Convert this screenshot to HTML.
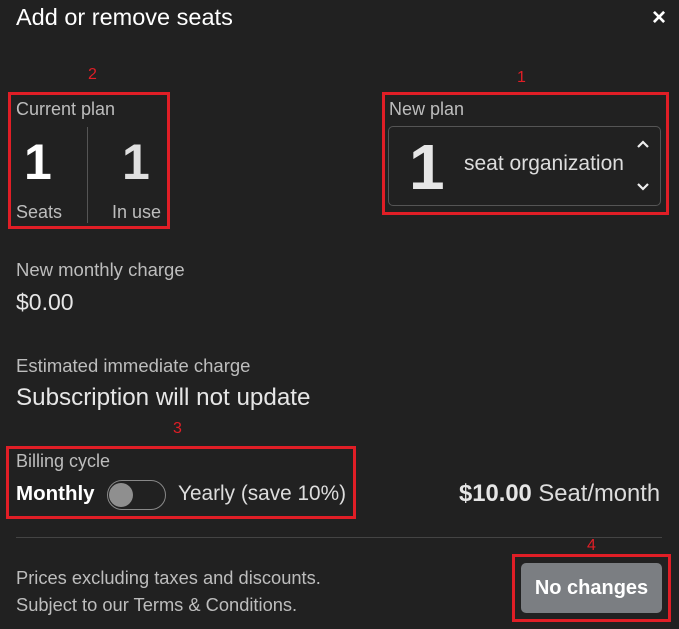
<!DOCTYPE html>
<html><head><style>
body{margin:0;width:679px;height:629px;background:#212121;font-family:"Liberation Sans",Arial,sans-serif;position:relative;overflow:hidden;color:#ddd}
.a{position:absolute;white-space:nowrap}
.red{position:absolute;border:3px solid #e01e26;box-sizing:border-box}
.rn{position:absolute;color:#e01e26;font-size:16px}
.lab{color:#bdbdbd;font-size:18px}
</style></head><body>
<div class="a" style="left:16px;top:4px;font-size:23.5px;color:#fff">Add or remove seats</div>
<div class="a" style="left:652px;top:4px;font-size:24px;color:#fff;font-weight:bold">×</div>

<div class="rn" style="left:88px;top:66px">2</div>
<div class="rn" style="left:517px;top:69px">1</div>
<div class="rn" style="left:173px;top:420px">3</div>
<div class="rn" style="left:587px;top:537px">4</div>

<div class="red" style="left:8px;top:92px;width:162px;height:137px"></div>
<div class="a lab" style="left:16px;top:99px">Current plan</div>
<div class="a" style="left:24px;top:133px;font-size:50px;font-weight:bold;color:#fff">1</div>
<div class="a" style="left:122px;top:133px;font-size:50px;font-weight:bold;color:#e0e0e0">1</div>
<div class="a" style="left:87px;top:127px;width:1px;height:96px;background:#555"></div>
<div class="a lab" style="left:16px;top:202px">Seats</div>
<div class="a lab" style="left:112px;top:202px">In use</div>

<div class="red" style="left:382px;top:92px;width:287px;height:123px"></div>
<div class="a lab" style="left:389px;top:99px">New plan</div>
<div class="a" style="left:388px;top:126px;width:273px;height:80px;border:1px solid #555;border-radius:5px;box-sizing:border-box"></div>
<div class="a" style="left:409px;top:130px;font-size:64px;font-weight:bold;color:#e6e6e6">1</div>
<div class="a" style="left:464px;top:152px;font-size:21px;color:#ddd">seat organization</div>
<svg class="a" style="left:635px;top:138px" width="16" height="56"><path d="M3 9 L8 4 L13 9" stroke="#eee" stroke-width="2.2" fill="none"/><path d="M3 46 L8 51 L13 46" stroke="#eee" stroke-width="2.2" fill="none"/></svg>

<div class="a lab" style="left:16px;top:259px;font-size:18.5px">New monthly charge</div>
<div class="a" style="left:16px;top:289px;font-size:23px;color:#e6e6e6">$0.00</div>
<div class="a lab" style="left:16px;top:355px;font-size:18.5px">Estimated immediate charge</div>
<div class="a" style="left:16px;top:384px;font-size:24.2px;color:#e6e6e6">Subscription will not update</div>

<div class="red" style="left:6px;top:446px;width:350px;height:73px"></div>
<div class="a lab" style="left:16px;top:451px">Billing cycle</div>
<div class="a" style="left:16px;top:482px;font-size:20.5px;font-weight:bold;color:#fff">Monthly</div>
<div class="a" style="left:107px;top:480px;width:59px;height:30px;border:1px solid #888;border-radius:16px;box-sizing:border-box"></div>
<div class="a" style="left:109px;top:483px;width:24px;height:24px;border-radius:50%;background:#8f8f8f"></div>
<div class="a" style="left:178px;top:482px;font-size:20.8px;color:#ddd">Yearly (save 10%)</div>
<div class="a" style="left:459px;top:480px;font-size:23.8px;color:#ddd"><b style="color:#e6e6e6">$10.00</b> Seat/month</div>

<div class="a" style="left:16px;top:537px;width:646px;height:1px;background:#444"></div>
<div class="a lab" style="left:16px;top:564px;line-height:27px;font-size:18.3px">Prices excluding taxes and discounts.<br>Subject to our Terms &amp; Conditions.</div>

<div class="red" style="left:512px;top:554px;width:159px;height:68px"></div>
<div class="a" style="left:521px;top:563px;width:141px;height:50px;background:#7b7e82;border-radius:5px;color:#fff;font-size:20px;font-weight:bold;text-align:center;line-height:50px">No changes</div>
</body></html>
